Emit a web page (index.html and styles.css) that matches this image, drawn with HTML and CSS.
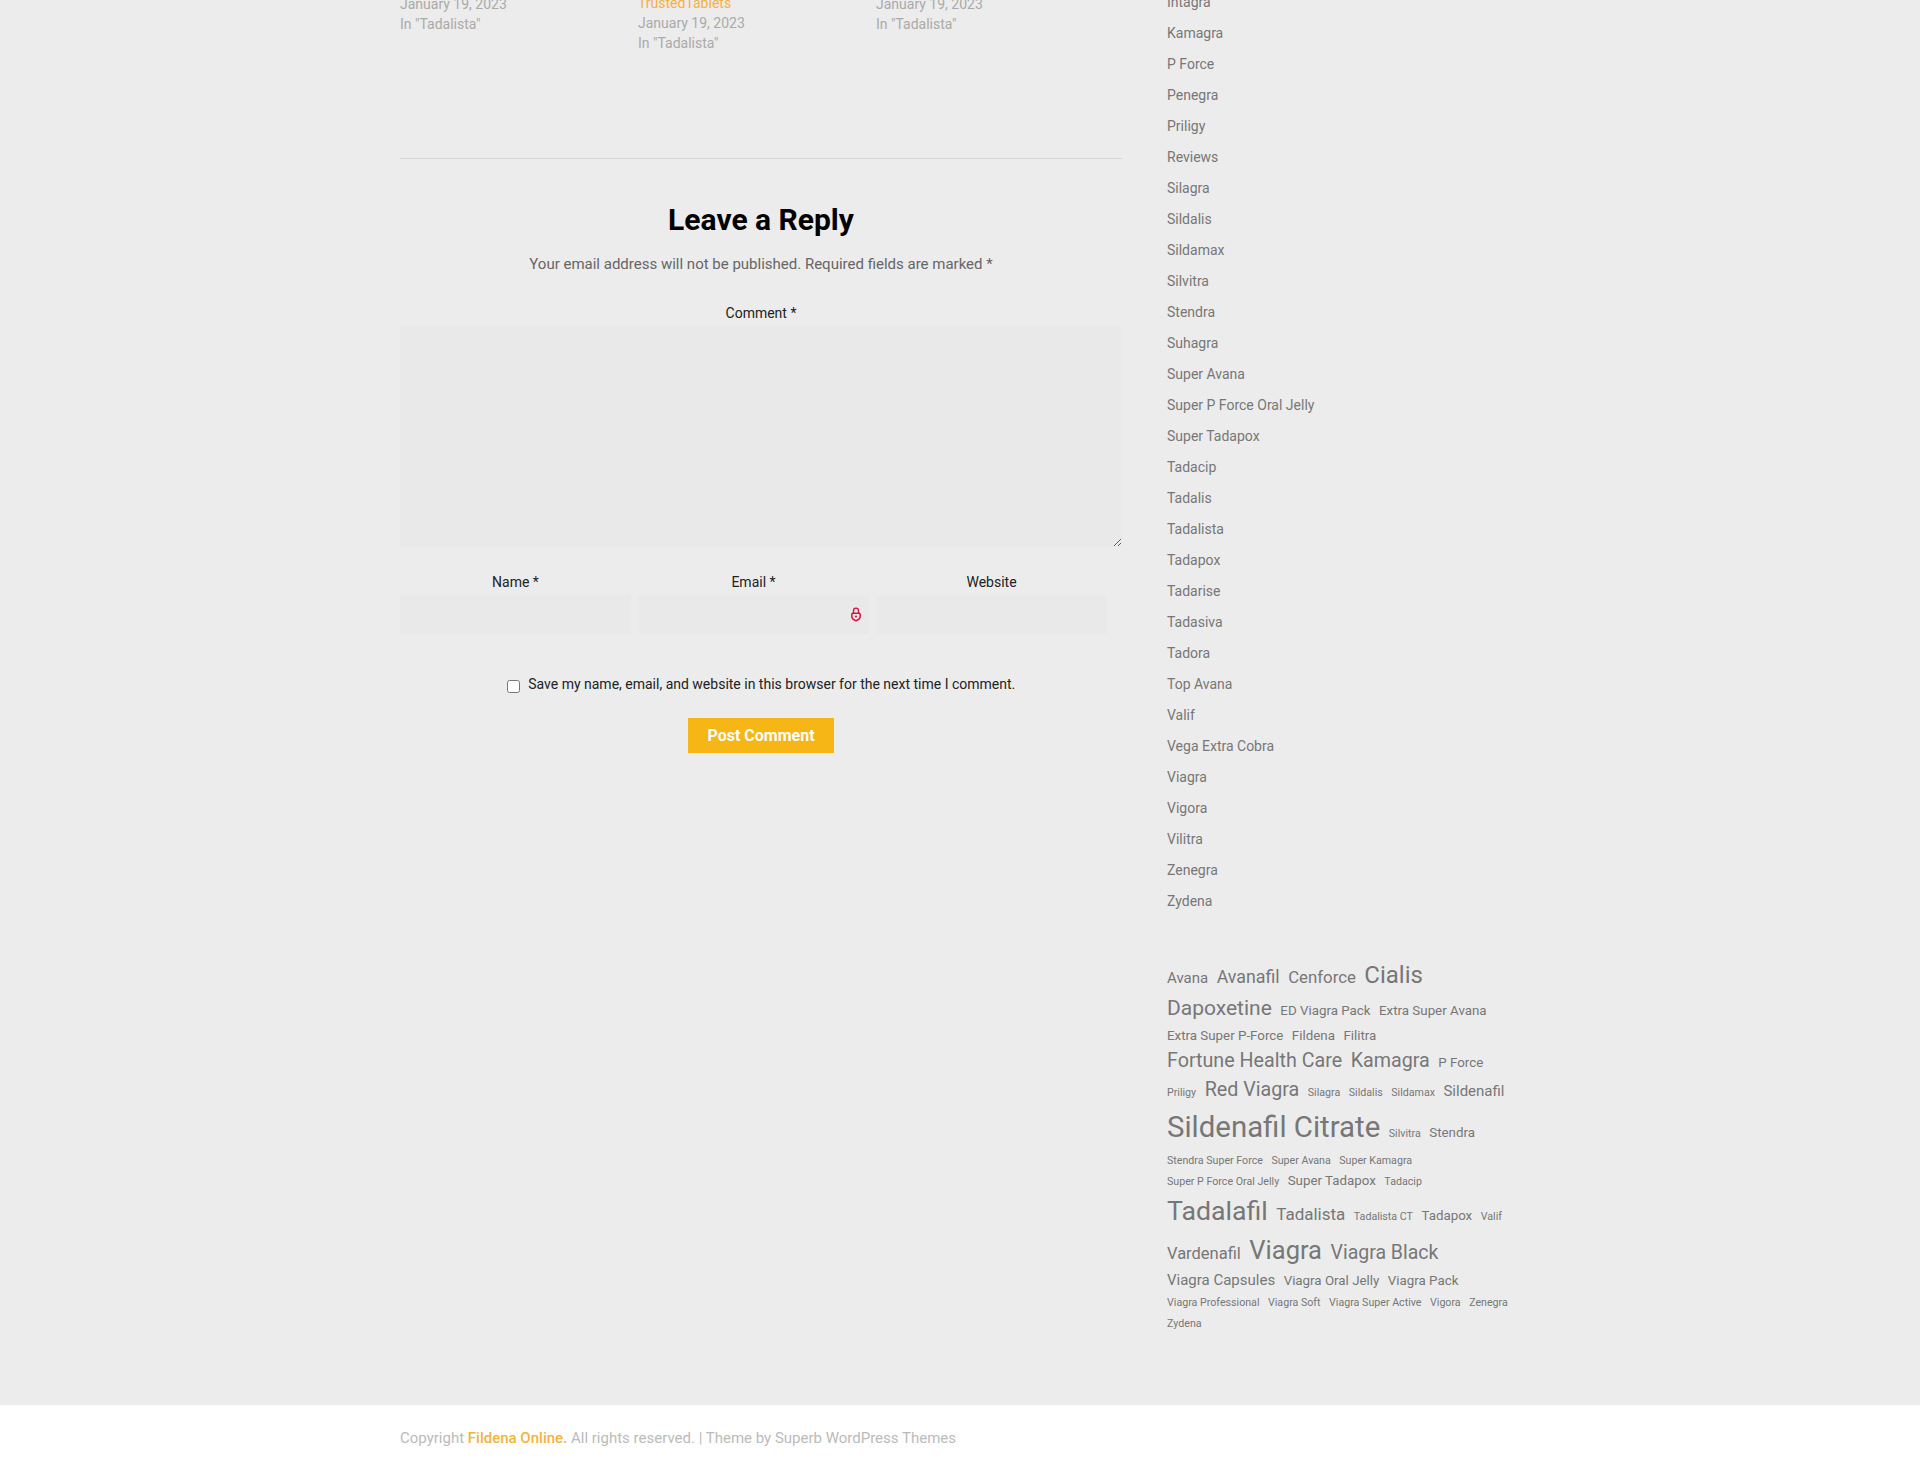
FILE: index.html
```html
<!DOCTYPE html>
<html>
	<head>
		<meta charset="UTF-8">
		<title>Leave a Reply</title>
		<link rel="stylesheet" href="styles.css">
	</head>
	<body>
		<div class="content">
			<div class="main">
				<div class="related">
					<div class="related-post">
						<p class="post-date">January 19, 2023</p>
						<p>In "Tadalista"</p>
					</div>
					<div class="related-post">
						<a href="#">TrustedTablets</a>
						<p class="post-date">January 19, 2023</p>
						<p>In "Tadalista"</p>
					</div>
					<div class="related-post">
						<p class="post-date">January 19, 2023</p>
						<p>In "Tadalista"</p>
					</div>
				</div>
				<div class="reply">
					<h3>Leave a Reply</h3>
					<p class="notes">Your email address will not be published. Required fields are marked *</p>
					<label class="field-label" for="comment">Comment *</label>
					<textarea id="comment"></textarea>
					<div class="fields">
						<div class="field">
							<label class="field-label" for="author">Name *</label>
							<input id="author" type="text">
						</div>
						<div class="field">
							<label class="field-label" for="email">Email *</label>
							<div class="email-wrap">
								<input id="email" type="text">
								<svg class="lock" width="10" height="16" viewBox="0 0 12 18">
									<path d="M3 8V5a3 3 0 0 1 6 0v3" fill="none" stroke="#d8103f" stroke-width="1.6"/>
									<path d="M2 8h8l1 1v3c0 2-2 4-5 5-3-1-5-3-5-5V9z" fill="none" stroke="#d8103f" stroke-width="1.8"/>
									<circle cx="6" cy="12" r="1.3" fill="#d8103f"/>
								</svg>
							</div>
						</div>
						<div class="field">
							<label class="field-label" for="url">Website</label>
							<input id="url" type="text">
						</div>
					</div>
					<p class="cookies">
						<input id="save" type="checkbox">
						<label for="save">Save my name, email, and website in this browser for the next time I comment.</label>
					</p>
					<button class="submit" type="button">Post Comment</button>
				</div>
			</div>
			<div class="sidebar">
				<ul class="cats">
					<li><a href="#">Intagra</a></li>
					<li><a href="#">Kamagra</a></li>
					<li><a href="#">P Force</a></li>
					<li><a href="#">Penegra</a></li>
					<li><a href="#">Priligy</a></li>
					<li><a href="#">Reviews</a></li>
					<li><a href="#">Silagra</a></li>
					<li><a href="#">Sildalis</a></li>
					<li><a href="#">Sildamax</a></li>
					<li><a href="#">Silvitra</a></li>
					<li><a href="#">Stendra</a></li>
					<li><a href="#">Suhagra</a></li>
					<li><a href="#">Super Avana</a></li>
					<li><a href="#">Super P Force Oral Jelly</a></li>
					<li><a href="#">Super Tadapox</a></li>
					<li><a href="#">Tadacip</a></li>
					<li><a href="#">Tadalis</a></li>
					<li><a href="#">Tadalista</a></li>
					<li><a href="#">Tadapox</a></li>
					<li><a href="#">Tadarise</a></li>
					<li><a href="#">Tadasiva</a></li>
					<li><a href="#">Tadora</a></li>
					<li><a href="#">Top Avana</a></li>
					<li><a href="#">Valif</a></li>
					<li><a href="#">Vega Extra Cobra</a></li>
					<li><a href="#">Viagra</a></li>
					<li><a href="#">Vigora</a></li>
					<li><a href="#">Vilitra</a></li>
					<li><a href="#">Zenegra</a></li>
					<li><a href="#">Zydena</a></li>
				</ul>
				<div class="tagcloud">
					<a href="#" style="font-size:15px">Avana</a>
					<a href="#" style="font-size:17.8px">Avanafil</a>
					<a href="#" style="font-size:16.8px">Cenforce</a>
					<a href="#" style="font-size:24px">Cialis</a>
					<a href="#" style="font-size:21px">Dapoxetine</a>
					<a href="#" style="font-size:13.33px">ED Viagra Pack</a>
					<a href="#" style="font-size:13.33px">Extra Super Avana</a>
					<a href="#" style="font-size:13.33px">Extra Super P-Force</a>
					<a href="#" style="font-size:13.33px">Fildena</a>
					<a href="#" style="font-size:13.33px">Filitra</a>
					<a href="#" style="font-size:19.7px">Fortune Health Care</a>
					<a href="#" style="font-size:19.7px">Kamagra</a>
					<a href="#" style="font-size:13.33px">P Force</a>
					<a href="#" style="font-size:10.67px">Priligy</a>
					<a href="#" style="font-size:19.7px">Red Viagra</a>
					<a href="#" style="font-size:10.67px">Silagra</a>
					<a href="#" style="font-size:10.67px">Sildalis</a>
					<a href="#" style="font-size:10.67px">Sildamax</a>
					<a href="#" style="font-size:15px">Sildenafil</a>
					<a href="#" style="font-size:29.4px">Sildenafil Citrate</a>
					<a href="#" style="font-size:10.67px">Silvitra</a>
					<a href="#" style="font-size:13.33px">Stendra</a>
					<a href="#" style="font-size:10.67px">Stendra Super Force</a>
					<a href="#" style="font-size:10.67px">Super Avana</a>
					<a href="#" style="font-size:10.67px">Super Kamagra</a>
					<a href="#" style="font-size:10.67px">Super P Force Oral Jelly</a>
					<a href="#" style="font-size:13.33px">Super Tadapox</a>
					<a href="#" style="font-size:10.67px">Tadacip</a>
					<a href="#" style="font-size:26.67px">Tadalafil</a>
					<a href="#" style="font-size:17px">Tadalista</a>
					<a href="#" style="font-size:10.67px">Tadalista CT</a>
					<a href="#" style="font-size:13.33px">Tadapox</a>
					<a href="#" style="font-size:10.67px">Valif</a>
					<a href="#" style="font-size:16.5px">Vardenafil</a>
					<a href="#" style="font-size:25.5px">Viagra</a>
					<a href="#" style="font-size:19.5px">Viagra Black</a>
					<a href="#" style="font-size:15px">Viagra Capsules</a>
					<a href="#" style="font-size:13.33px">Viagra Oral Jelly</a>
					<a href="#" style="font-size:13.33px">Viagra Pack</a>
					<a href="#" style="font-size:10.67px">Viagra Professional</a>
					<a href="#" style="font-size:10.67px">Viagra Soft</a>
					<a href="#" style="font-size:10.67px">Viagra Super Active</a>
					<a href="#" style="font-size:10.67px">Vigora</a>
					<a href="#" style="font-size:10.67px">Zenegra</a>
					<a href="#" style="font-size:10.67px">Zydena</a>
				</div>
			</div>
		</div>
		<div class="footer">
			<p>Copyright <a href="#">Fildena Online.</a> All rights reserved. | Theme by Superb WordPress Themes</p>
		</div>
	</body>
</html>
```

FILE: styles.css
```css
*{
	margin: 0;
	padding: 0;
	box-sizing: border-box;
}
body{
	background: #ececec;
	font-family: Roboto, "Liberation Sans", sans-serif;
	font-size: 14px;
	color: #666;
	overflow: hidden;
}
a{
	text-decoration: none;
}
.content{
	width: 1120px;
	height: 1405px;
	margin: 0 auto;
	display: flex;
	gap: 45px;
	overflow: hidden;
}
.main{
	width: 722px;
}
.related{
	display: flex;
	gap: 38px;
	height: 165px;
	margin-top: -6px;
	border-bottom: 1px solid #d6d6d6;
	color: #aaa;
	line-height: 20px;
}
.related-post{
	width: 200px;
}
.related-post a{
	color: #f5b041;
	display: block;
	margin-top: -1px;
}
.reply{
	text-align: center;
}
.reply h3{
	margin-top: 43px;
	font-size: 30px;
	line-height: 36px;
	font-weight: 700;
	color: #000;
}
.notes{
	margin-top: 16px;
	font-size: 15px;
	line-height: 20px;
	color: #666;
}
.field-label{
	display: block;
	line-height: 20px;
	color: #222;
}
.reply > .field-label{
	margin-top: 29px;
}
textarea{
	display: block;
	width: 722px;
	height: 221px;
	margin-top: 3px;
	background: #e9e9e9;
	border: 0;
	outline: 0;
}
.fields{
	display: flex;
	gap: 7px;
	margin-top: 25px;
}
.field{
	width: 231px;
}
.field input{
	display: block;
	width: 231px;
	height: 39px;
	margin-top: 3px;
	background: #e9e9e9;
	border: 0;
	outline: 0;
}
.email-wrap{
	position: relative;
}
.lock{
	position: absolute;
	right: 8px;
	top: 11px;
}
.cookies{
	margin-top: 40px;
	line-height: 20px;
	color: #222;
}
.cookies input{
	vertical-align: -4px;
	margin-right: 5px;
}
.submit{
	display: block;
	width: 146px;
	height: 35px;
	margin: 24px auto 0;
	background: #f5b616;
	border: 0;
	color: #fff;
	font-family: inherit;
	font-size: 16px;
	font-weight: 700;
}
.sidebar{
	width: 353px;
}
.cats{
	list-style: none;
	margin-top: -13px;
}
.cats li{
	height: 31px;
	line-height: 31px;
}
.cats a{
	color: #777;
}
.tagcloud{
	margin-top: 40px;
	line-height: 1.5;
}
.tagcloud a{
	color: #777;
	margin-right: 5px;
	white-space: nowrap;
}
.footer{
	height: 67px;
	background: #fff;
	padding-top: 23px;
	color: #bbb;
	font-size: 15px;
}
.footer p{
	width: 1120px;
	margin: 0 auto;
	line-height: 20px;
}
.footer a{
	color: #f2b33d;
	font-weight: 500;
}
```
